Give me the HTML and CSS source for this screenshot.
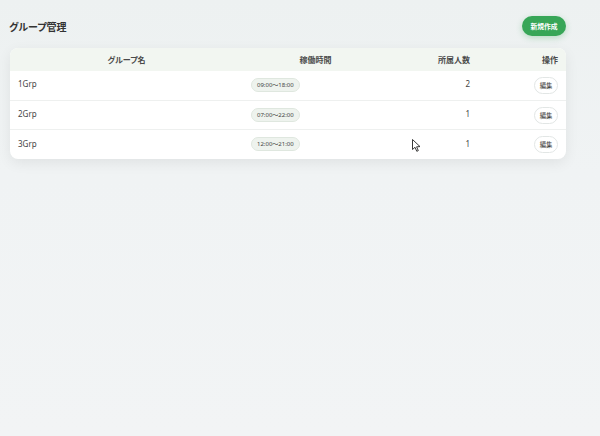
FILE: index.html
```html
<!DOCTYPE html>
<html lang="ja">
<head>
<meta charset="utf-8">
<link rel="stylesheet" href="styles.css">
</head>
<body>
<div class="page">
  <div class="topbar">
    <h1 class="title">グループ管理</h1>
    <button class="btn-new">新規作成</button>
  </div>
  <div class="card">
    <table class="tbl">
      <colgroup>
        <col class="c1"><col class="c2"><col class="c3"><col class="c4">
      </colgroup>
      <thead>
        <tr><th class="th-center">グループ名</th><th class="th-center">稼働時間</th><th class="th-right">所属人数</th><th class="th-right">操作</th></tr>
      </thead>
      <tbody>
        <tr><td class="txt">1Grp</td><td class="time"><span class="pill">09:00〜18:00</span></td><td class="txt num">2</td><td class="act"><button class="btn-edit">編集</button></td></tr>
        <tr><td class="txt">2Grp</td><td class="time"><span class="pill">07:00〜22:00</span></td><td class="txt num">1</td><td class="act"><button class="btn-edit">編集</button></td></tr>
        <tr><td class="txt">3Grp</td><td class="time"><span class="pill">12:00〜21:00</span></td><td class="txt num">1</td><td class="act"><button class="btn-edit">編集</button></td></tr>
      </tbody>
    </table>
  </div>
</div>
<svg class="cursor" width="9" height="13" viewBox="0 0 9 13"><path d="M0.5 0.5 L0.5 10.5 L3 8.3 L4.8 12.3 L6.3 11.6 L4.6 7.8 L8 7.6 Z" fill="#fff" stroke="#222" stroke-width="0.9" stroke-linejoin="round"/></svg>
</body>
</html>
```
FILE: styles.css
```css
html, body {
  margin: 0;
  padding: 0;
  height: 100%;
}
body {
  background: linear-gradient(180deg, #edf1f1 0%, #f0f3f4 40%, #f2f4f5 100%);
  font-family: "Noto Sans", "Noto Sans CJK JP", sans-serif;
  font-feature-settings: "palt";
  color: #444;
}
.page {
  width: 556px;
  margin-left: 10px;
  padding-top: 16px;
}
.topbar {
  display: flex;
  align-items: center;
  justify-content: space-between;
  height: 20px;
}
.title {
  margin: 0;
  font-size: 10px;
  font-weight: 700;
  color: #333;
  margin-left: -1px;
}
.btn-new {
  border: none;
  background: #37a657;
  color: #fff;
  font-family: inherit;
  font-feature-settings: "palt";
  font-size: 6.8px;
  font-weight: 700;
  height: 20px;
  width: 44px;
  padding: 0;
  border-radius: 10px;
  box-shadow: 0 2px 6px rgba(55, 166, 87, 0.3);
}
.card {
  margin-top: 12px;
  background: #fff;
  border-radius: 8px;
  overflow: hidden;
  box-shadow: 0 4px 14px rgba(0, 0, 0, 0.07);
}
.tbl {
  width: 100%;
  border-collapse: collapse;
  table-layout: fixed;
}
.c1 { width: 233px; }
.c2 { width: 145px; }
.c3 { width: 90px; }
.c4 { width: 88px; }
.tbl th {
  height: 23px;
  padding: 0 8px;
  background: #f2f6f1;
  font-size: 8px;
  font-weight: 700;
  color: #4a4a4a;
}
.th-center { text-align: center; }
.th-right { text-align: right; }
.tbl td {
  height: 29.4px;
  padding: 0 8px;
  font-size: 8px;
  color: #444;
  border-top: 1px solid #eef0ef;
  vertical-align: middle;
  box-sizing: border-box;
}
.tbl td.txt { padding-bottom: 3px; }
.tbl td.time { padding-bottom: 1px; }
.tbl tbody tr:first-child td { border-top: none; }
.num { text-align: right; }
.act { text-align: right; }
.pill {
  display: inline-block;
  height: 12px;
  line-height: 12px;
  padding: 0 5px;
  font-size: 6px;
  color: #444;
  background: #eef3ee;
  border: 1px solid #dfe7df;
  border-radius: 7px;
  font-feature-settings: normal;
}
.btn-edit {
  display: inline-block;
  height: 17px;
  width: 24px;
  padding: 0;
  font-family: inherit;
  font-size: 6.3px;
  font-weight: 400;
  color: #333;
  background: #fff;
  border: 1px solid #e2e6e5;
  border-radius: 9px;
  vertical-align: middle;
}
.cursor {
  position: absolute;
  left: 412px;
  top: 139px;
}
```
